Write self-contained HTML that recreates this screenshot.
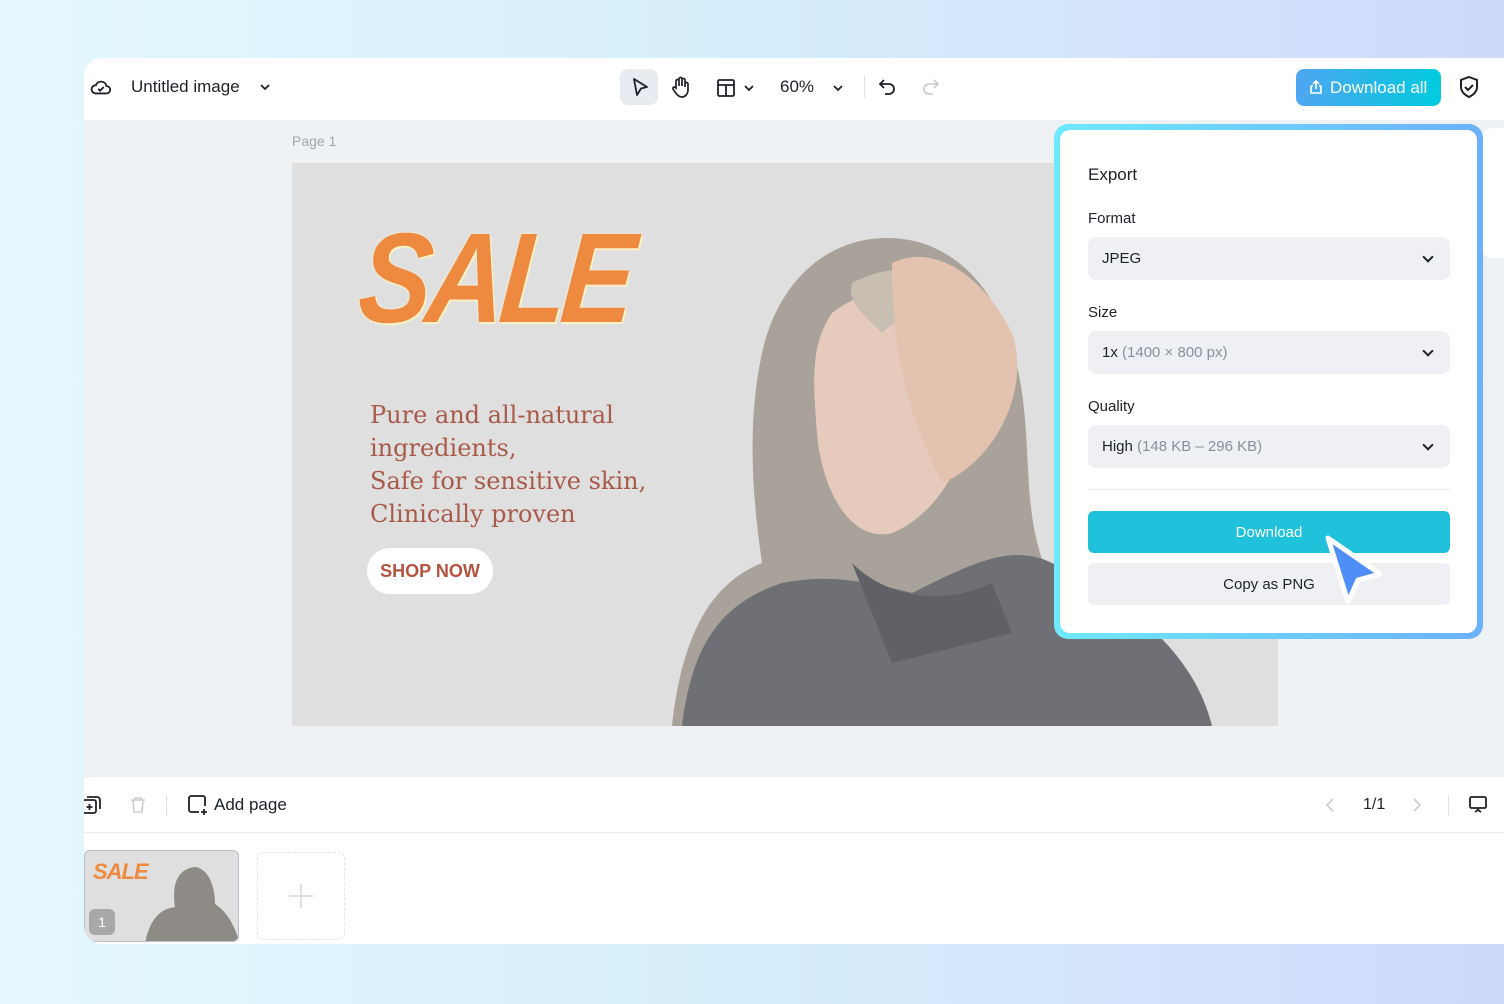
<!DOCTYPE html>
<html><head><meta charset="utf-8"><style>
*{margin:0;padding:0;box-sizing:border-box}
body{width:1504px;height:1004px;overflow:hidden;font-family:"Liberation Sans",sans-serif;background:linear-gradient(90deg,#e4f8fd 0%,#d6eefb 50%,#cfd9fb 100%);position:relative;color:#1d2129}
.app{position:absolute;left:84px;top:58px;width:1420px;height:886px;background:#fff;border-radius:18px 0 0 18px;overflow:hidden}
.abs{position:absolute}
.canvas{position:absolute;left:0;top:62px;width:1420px;height:657px;background:#eff2f5}
.sel{position:absolute;border-radius:8px;background:#eef0f3;height:43px;padding:0 14px;font-size:15px;display:flex;align-items:center;justify-content:space-between;width:362px;left:28px}
.chev{display:inline-block;width:8px;height:8px;border-right:2px solid #1d2129;border-bottom:2px solid #1d2129;transform:rotate(45deg);margin-top:-4px;margin-right:4px}
.lbl{position:absolute;left:28px;font-size:15px}
.g{color:#86909c}
</style></head><body>
<div class="app">
 <svg class="abs" style="left:6px;top:18px" width="22" height="22" viewBox="0 0 24 24" fill="none" stroke="#1d2129" stroke-width="2"><path d="M6 19h12a4 4 0 0 0 0-8 6 6 0 0 0-11.5-1A4.5 4.5 0 0 0 6 19z"/><path d="M9 14l2 2 4-4"/></svg>
 <div class="abs" style="left:47px;top:19px;font-size:17px">Untitled image</div>
 <svg class="abs" style="left:175px;top:24px" width="12" height="10" viewBox="0 0 12 10"><path d="M2 3l4 4 4-4" stroke="#1d2129" stroke-width="1.8" fill="none"/></svg>
 <div class="abs" style="left:536px;top:11px;width:38px;height:36px;background:#e8ebef;border-radius:8px"></div>
 <svg class="abs" style="left:546px;top:19px" width="20" height="20" viewBox="0 0 20 20"><path d="M4 2l13 8-6 1.5L7 18z" stroke="#1d2129" stroke-width="1.8" fill="none" stroke-linejoin="round"/></svg>
 <svg class="abs" style="left:587px;top:18px" width="20" height="22" viewBox="0 0 20 22" fill="none" stroke="#1d2129" stroke-width="1.7"><path d="M5 12V5a1.5 1.5 0 0 1 3 0v5V3a1.5 1.5 0 0 1 3 0v7V4a1.5 1.5 0 0 1 3 0v7-3a1.5 1.5 0 0 1 3 0v6c0 4-3 7-6 7s-5-2-7-5l-2-3a1.5 1.5 0 0 1 2.5-1.5z"/></svg>
 <svg class="abs" style="left:632px;top:20px" width="20" height="20" viewBox="0 0 20 20" fill="none" stroke="#1d2129" stroke-width="1.8"><rect x="2" y="2" width="16" height="16" rx="1.5"/><path d="M2 7h16M10 7v11"/></svg>
 <svg class="abs" style="left:659px;top:25px" width="12" height="10"><path d="M2 3l4 4 4-4" stroke="#1d2129" stroke-width="1.8" fill="none"/></svg>
 <div class="abs" style="left:696px;top:19px;font-size:17px">60%</div>
 <svg class="abs" style="left:748px;top:25px" width="12" height="10"><path d="M2 3l4 4 4-4" stroke="#1d2129" stroke-width="1.8" fill="none"/></svg>
 <div class="abs" style="left:780px;top:18px;width:1px;height:22px;background:#dde1e6"></div>
 <svg class="abs" style="left:794px;top:19px" width="20" height="20" viewBox="0 0 20 20" fill="none" stroke="#1d2129" stroke-width="1.8"><path d="M6 3L2 7l4 4"/><path d="M2 7h9a5 5 0 0 1 0 10H7"/></svg>
 <svg class="abs" style="left:836px;top:19px" width="20" height="20" viewBox="0 0 20 20" fill="none" stroke="#c9cdd4" stroke-width="1.8"><path d="M14 3l4 4-4 4"/><path d="M18 7H9a5 5 0 0 0 0 10h4"/></svg>
 <div class="abs" style="left:1212px;top:11px;width:145px;height:37px;border-radius:8px;background:linear-gradient(90deg,#4fa6f0,#00cbe0);color:#fff;font-size:17px;display:flex;align-items:center;padding-left:34px">Download all</div>
 <svg class="abs" style="left:1224px;top:21px" width="16" height="16" viewBox="0 0 16 16" fill="none" stroke="#fff" stroke-width="1.6"><path d="M5 7H3v7h10V7h-2M8 10V2M5 5l3-3 3 3"/></svg>
 <svg class="abs" style="left:1374px;top:17px" width="22" height="24" viewBox="0 0 22 24" fill="none" stroke="#1d2129" stroke-width="2"><path d="M11 2l8 3v7c0 5-4 8-8 10-4-2-8-5-8-10V5z"/><path d="M7 12l3 3 5-5"/></svg>
 <div class="canvas">
  <div class="abs" style="left:208px;top:13px;font-size:14px;color:#a0a6ae">Page 1</div>
  <div class="abs" style="left:1398px;top:8px;width:30px;height:130px;background:#fff;border-radius:10px"></div>
  <div class="abs" style="left:208px;top:43px;width:986px;height:563px;background:#e0dfdf;overflow:hidden">
   <svg class="abs" style="left:0;top:0" width="986" height="563">
    <path d="M380 563C390 470 420 420 470 400 460 330 455 260 470 190 490 100 560 60 630 80 690 100 720 160 730 230 740 300 730 360 760 420 820 440 880 470 900 563Z" fill="#a8a29a"/>
    <path d="M540 150C590 110 660 130 680 200 690 280 650 350 600 370 560 380 530 330 525 270 520 210 520 180 540 150Z" fill="#e6cbbd"/>
    <path d="M560 120C620 90 680 110 690 160 670 150 620 140 590 170 570 150 555 140 560 120Z" fill="#c8bfb2"/>
    <path d="M600 100C640 80 690 110 720 170 740 230 700 300 650 320 620 260 600 200 600 100Z" fill="#e3c3b0"/>
    <path d="M390 563C400 480 430 440 490 420 540 410 580 420 620 430 680 400 720 380 760 400 820 430 900 480 920 563Z" fill="#6e7076"/>
    <path d="M560 400C600 440 660 440 700 420L720 470 600 500Z" fill="#5f6167"/>
   </svg>
   <div class="abs" style="left:68px;top:52px;font-weight:bold;font-style:italic;font-size:128px;letter-spacing:-6px;color:#ee8a3f;transform:scaleX(0.85) skewX(-6deg);transform-origin:left;text-shadow:0 0 3px #fff6cf,2px 2px 0 #fbefc4;line-height:1">SALE</div>
   <div class="abs" style="left:78px;top:236px;font-family:'DejaVu Serif',serif;font-size:24px;line-height:33px;color:#a85a4a">Pure and all-natural<br>ingredients,<br>Safe for sensitive skin,<br>Clinically proven</div>
   <div class="abs" style="left:75px;top:385px;width:126px;height:46px;border-radius:23px;background:#fff;color:#b5533f;font-weight:bold;font-size:18px;display:flex;align-items:center;justify-content:center">SHOP NOW</div>
  </div>
 </div>
 <svg class="abs" style="left:-2px;top:737px" width="20" height="20" viewBox="0 0 20 20" fill="none" stroke="#1d2129" stroke-width="1.8"><rect x="1" y="5" width="13" height="13" rx="2"/><path d="M5 2h10a3 3 0 0 1 3 3v9M7.5 9v6M4.5 12h6"/></svg>
 <svg class="abs" style="left:45px;top:738px" width="18" height="18" viewBox="0 0 18 18" fill="none" stroke="#c9cdd4" stroke-width="1.6"><path d="M2 4h14M6 4V2h6v2M4 4l1 12h8l1-12"/></svg>
 <div class="abs" style="left:82px;top:737px;width:1px;height:20px;background:#dde1e6"></div>
 <svg class="abs" style="left:103px;top:736px" width="22" height="22" viewBox="0 0 22 22" fill="none" stroke="#1d2129" stroke-width="1.8"><path d="M12 18H4a2 2 0 0 1-2-2V4a2 2 0 0 1 2-2h12a2 2 0 0 1 2 2v8M17 15v6M14 18h6"/></svg>
 <div class="abs" style="left:130px;top:737px;font-size:17px">Add page</div>
 <svg class="abs" style="left:1240px;top:739px" width="12" height="16"><path d="M9 2L3 8l6 6" stroke="#c9cdd4" stroke-width="1.6" fill="none"/></svg>
 <div class="abs" style="left:1279px;top:738px;font-size:16px">1/1</div>
 <svg class="abs" style="left:1327px;top:739px" width="12" height="16"><path d="M3 2l6 6-6 6" stroke="#c9cdd4" stroke-width="1.6" fill="none"/></svg>
 <div class="abs" style="left:1364px;top:737px;width:1px;height:20px;background:#dde1e6"></div>
 <svg class="abs" style="left:1384px;top:737px" width="20" height="20" viewBox="0 0 20 20" fill="none" stroke="#1d2129" stroke-width="1.8"><rect x="2" y="2" width="16" height="11" rx="1.5"/><path d="M10 13v3M7 17l3-2 3 2"/></svg>
 <div class="abs" style="left:0;top:774px;width:1420px;height:1px;background:#eceef1"></div>
 <div class="abs" style="left:0;top:792px;width:155px;height:92px;border:1.5px solid #b8c0cc;border-radius:6px;background:#e0dfdf;overflow:hidden">
  <div class="abs" style="left:8px;top:8px;font-weight:bold;font-style:italic;font-size:22px;color:#ee8a3f;letter-spacing:-1px">SALE</div>
  <svg class="abs" style="left:55px;top:8px" width="100" height="84"><path d="M5 84C10 60 20 50 35 48 32 30 35 10 55 8 70 10 75 30 75 45 90 55 95 70 100 84Z" fill="#8e8a85"/></svg>
  <div class="abs" style="left:4px;top:58px;width:26px;height:26px;background:#a8a8a8;border-radius:6px;color:#fff;font-size:14px;text-align:center;line-height:26px">1</div>
 </div>
 <div class="abs" style="left:173px;top:794px;width:88px;height:88px;border:1px dashed #e3e6ea;border-radius:6px"></div>
 <svg class="abs" style="left:204px;top:825px" width="26" height="26"><path d="M13 1v24M1 13h24" stroke="#dde0e5" stroke-width="2"/></svg>
</div>
<div class="abs" style="left:1054px;top:124px;width:429px;height:515px;border-radius:14px;background:linear-gradient(90deg,#6ee9fd,#6ab1fb);padding:6px">
 <div style="position:relative;width:100%;height:100%;background:#fff;border-radius:10px">
  <div class="lbl" style="top:35px;font-size:17px">Export</div>
  <div class="lbl" style="top:80px">Format</div>
  <div class="sel" style="top:107px"><span>JPEG</span><i class="chev"></i></div>
  <div class="lbl" style="top:174px">Size</div>
  <div class="sel" style="top:201px"><span>1x <span class="g">(1400 × 800 px)</span></span><i class="chev"></i></div>
  <div class="lbl" style="top:268px">Quality</div>
  <div class="sel" style="top:295px"><span>High <span class="g">(148 KB – 296 KB)</span></span><i class="chev"></i></div>
  <div class="abs" style="left:28px;top:359px;width:362px;height:1px;background:#e5e8eb"></div>
  <div class="abs" style="left:28px;top:381px;width:362px;height:42px;border-radius:6px;background:#1fc2da;color:#fff;font-size:15px;display:flex;align-items:center;justify-content:center">Download</div>
  <div class="abs" style="left:28px;top:433px;width:362px;height:42px;border-radius:6px;background:#eef0f3;font-size:15px;display:flex;align-items:center;justify-content:center">Copy as PNG</div>
 </div>
</div>
<svg class="abs" style="left:1318px;top:530px" width="72" height="80" viewBox="0 0 72 80"><path d="M10 8L62 44 40 50 30 72Z" fill="#4f8ef7" stroke="#fff" stroke-width="5" stroke-linejoin="round"/></svg>
</body></html>
